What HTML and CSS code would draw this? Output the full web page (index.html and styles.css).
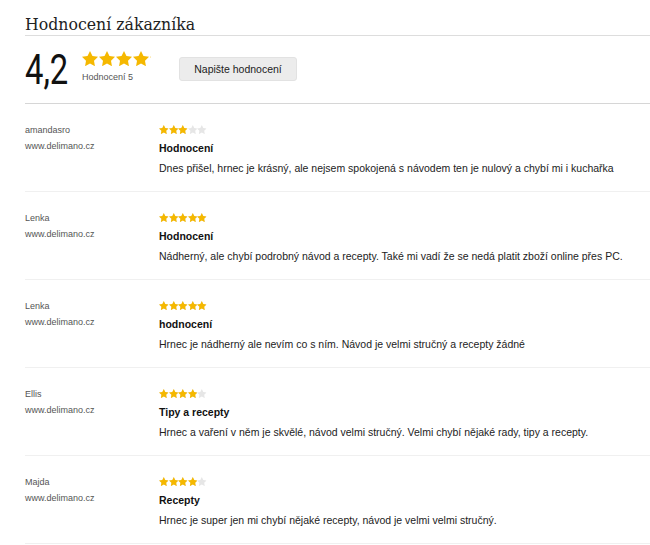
FILE: index.html
```html
<!DOCTYPE html>
<html lang="cs">
<head>
<meta charset="utf-8">
<link rel="stylesheet" href="styles.css">
</head>
<body>
<svg class="defs" width="0" height="0" aria-hidden="true">
  <symbol id="star" viewBox="2 2 20 19.1">
    <path d="M12 2l3.09 6.26L22 9.27l-5 4.87 1.18 6.88L12 17.77l-6.18 3.25L7 14.14 2 9.27l6.91-1.01L12 2z"/>
  </symbol>
</svg>
<div class="wrap">
  <h2 class="title">Hodnocení zákazníka</h2>
  <div class="summary">
    <div class="score"><span>4,2</span></div>
    <div class="score-meta">
      <div class="stars big">
        <div class="layer bg"><svg><use href="#star"/></svg><svg><use href="#star"/></svg><svg><use href="#star"/></svg><svg><use href="#star"/></svg><svg><use href="#star"/></svg></div>
        <div class="layer fg" style="width:82%"><svg><use href="#star"/></svg><svg><use href="#star"/></svg><svg><use href="#star"/></svg><svg><use href="#star"/></svg><svg><use href="#star"/></svg></div>
      </div>
      <div class="count">Hodnocení 5</div>
    </div>
    <button class="write">Napište hodnocení</button>
  </div>

  <div class="review">
    <div class="author"><div class="name">amandasro</div><div class="site">www.delimano.cz</div></div>
    <div class="body">
      <div class="stars small">
        <div class="layer bg"><svg><use href="#star"/></svg><svg><use href="#star"/></svg><svg><use href="#star"/></svg><svg><use href="#star"/></svg><svg><use href="#star"/></svg></div>
        <div class="layer fg" style="width:60%"><svg><use href="#star"/></svg><svg><use href="#star"/></svg><svg><use href="#star"/></svg><svg><use href="#star"/></svg><svg><use href="#star"/></svg></div>
      </div>
      <div class="rtitle">Hodnocení</div>
      <p class="text">Dnes přišel, hrnec je krásný, ale nejsem spokojená s návodem ten je nulový a chybí mi i kuchařka</p>
    </div>
  </div>

  <div class="review">
    <div class="author"><div class="name">Lenka</div><div class="site">www.delimano.cz</div></div>
    <div class="body">
      <div class="stars small">
        <div class="layer bg"><svg><use href="#star"/></svg><svg><use href="#star"/></svg><svg><use href="#star"/></svg><svg><use href="#star"/></svg><svg><use href="#star"/></svg></div>
        <div class="layer fg" style="width:100%"><svg><use href="#star"/></svg><svg><use href="#star"/></svg><svg><use href="#star"/></svg><svg><use href="#star"/></svg><svg><use href="#star"/></svg></div>
      </div>
      <div class="rtitle">Hodnocení</div>
      <p class="text">Nádherný, ale chybí podrobný návod a recepty. Také mi vadí že se nedá platit zboží online přes PC.</p>
    </div>
  </div>

  <div class="review">
    <div class="author"><div class="name">Lenka</div><div class="site">www.delimano.cz</div></div>
    <div class="body">
      <div class="stars small">
        <div class="layer bg"><svg><use href="#star"/></svg><svg><use href="#star"/></svg><svg><use href="#star"/></svg><svg><use href="#star"/></svg><svg><use href="#star"/></svg></div>
        <div class="layer fg" style="width:100%"><svg><use href="#star"/></svg><svg><use href="#star"/></svg><svg><use href="#star"/></svg><svg><use href="#star"/></svg><svg><use href="#star"/></svg></div>
      </div>
      <div class="rtitle">hodnocení</div>
      <p class="text">Hrnec je nádherný ale nevím co s ním. Návod je velmi stručný a recepty žádné</p>
    </div>
  </div>

  <div class="review">
    <div class="author"><div class="name">Ellis</div><div class="site">www.delimano.cz</div></div>
    <div class="body">
      <div class="stars small">
        <div class="layer bg"><svg><use href="#star"/></svg><svg><use href="#star"/></svg><svg><use href="#star"/></svg><svg><use href="#star"/></svg><svg><use href="#star"/></svg></div>
        <div class="layer fg" style="width:80%"><svg><use href="#star"/></svg><svg><use href="#star"/></svg><svg><use href="#star"/></svg><svg><use href="#star"/></svg><svg><use href="#star"/></svg></div>
      </div>
      <div class="rtitle">Tipy a recepty</div>
      <p class="text">Hrnec a vaření v něm je skvělé, návod velmi stručný. Velmi chybí nějaké rady, tipy a recepty.</p>
    </div>
  </div>

  <div class="review">
    <div class="author"><div class="name">Majda</div><div class="site">www.delimano.cz</div></div>
    <div class="body">
      <div class="stars small">
        <div class="layer bg"><svg><use href="#star"/></svg><svg><use href="#star"/></svg><svg><use href="#star"/></svg><svg><use href="#star"/></svg><svg><use href="#star"/></svg></div>
        <div class="layer fg" style="width:80%"><svg><use href="#star"/></svg><svg><use href="#star"/></svg><svg><use href="#star"/></svg><svg><use href="#star"/></svg><svg><use href="#star"/></svg></div>
      </div>
      <div class="rtitle">Recepty</div>
      <p class="text">Hrnec je super jen mi chybí nějaké recepty, návod je velmi velmi stručný.</p>
    </div>
  </div>
</div>
</body>
</html>
```

FILE: styles.css
```css
html, body {
  margin: 0;
  padding: 0;
  background: #fff;
}
body {
  font-family: "Liberation Sans", Arial, sans-serif;
  color: #222;
}
.defs {
  position: absolute;
  width: 0;
  height: 0;
  overflow: hidden;
}
.wrap {
  padding: 13px 0 0 25px;
}
.title {
  margin: 0;
  font-family: "DejaVu Serif Condensed", "DejaVu Serif", serif;
  font-weight: normal;
  font-size: 17.5px;
  line-height: 22px;
  color: #222;
  border-bottom: 1px solid #ddd;
}
.summary {
  display: flex;
  align-items: flex-start;
  height: 67px;
  border-bottom: 1px solid #d6d6d6;
}
.score {
  width: 57px;
  margin-top: 13px;
  font-family: Roboto, "Liberation Sans", sans-serif;
  font-weight: 400;
  font-size: 42px;
  line-height: 42px;
  color: #111;
}
.score span {
  display: inline-block;
  transform: scaleX(0.78);
  transform-origin: left center;
}
.score-meta {
  margin-top: 15px;
  width: 97px;
}
.stars {
  position: relative;
  display: block;
}
.layer {
  display: flex;
  white-space: nowrap;
}
.layer.fg {
  position: absolute;
  left: 0;
  top: 0;
  overflow: hidden;
  fill: #f5b800;
}
.layer svg {
  flex: none;
}
.big {
  width: 84px;
  height: 15px;
}
.big .layer {
  gap: 1px;
}
.big svg {
  width: 16px;
  height: 15.3px;
}
.big .bg {
  fill: #fff;
}
.small {
  width: 48px;
  height: 10px;
}
.small svg {
  width: 9.6px;
  height: 9.2px;
}
.small .bg {
  fill: #e6e6e6;
}
.count {
  font-size: 9px;
  color: #555;
  margin-top: 6px;
}
.write {
  margin-top: 21px;
  width: 118px;
  height: 24px;
  font-family: "Liberation Sans", Arial, sans-serif;
  font-size: 10.5px;
  color: #222;
  background: #ececec;
  border: 1px solid #e2e2e2;
  border-radius: 3px;
  padding: 0;
}
.review {
  display: flex;
  height: 87px;
  border-bottom: 1px solid #f0f0f0;
}
.review:first-of-type {
  height: 88px;
}
.author {
  width: 134px;
  padding-top: 21px;
  font-size: 9px;
  color: #555;
}
.site {
  margin-top: 6px;
}
.body {
  padding-top: 21px;
}
.rtitle {
  font-weight: bold;
  font-size: 10.5px;
  line-height: 12px;
  margin-top: 7px;
  color: #111;
}
.text {
  margin: 8px 0 0;
  font-size: 10.5px;
  line-height: 12px;
  color: #222;
}
```
